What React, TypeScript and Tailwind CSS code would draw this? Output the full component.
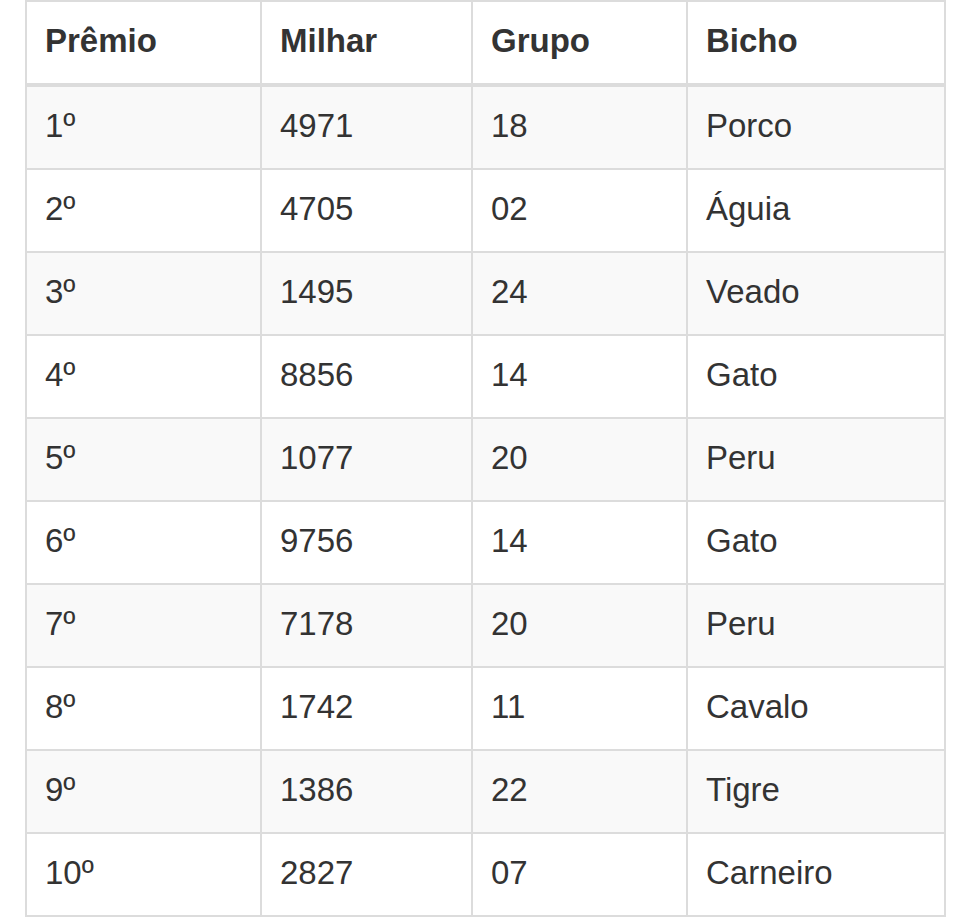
const rows = [
  ["1º", "4971", "18", "Porco"],
  ["2º", "4705", "02", "Águia"],
  ["3º", "1495", "24", "Veado"],
  ["4º", "8856", "14", "Gato"],
  ["5º", "1077", "20", "Peru"],
  ["6º", "9756", "14", "Gato"],
  ["7º", "7178", "20", "Peru"],
  ["8º", "1742", "11", "Cavalo"],
  ["9º", "1386", "22", "Tigre"],
  ["10º", "2827", "07", "Carneiro"],
];

const headers = ["Prêmio", "Milhar", "Grupo", "Bicho"];
const widths = ["w-[235px]", "w-[211px]", "w-[215px]", "w-[258px]"];

export default function App() {
  return (
    <div className="min-h-[923px] bg-white pl-[25px] font-['Liberation_Sans',Arial,sans-serif] text-[33px] leading-[45px] text-[#333]">
      <table className="w-[921px] table-fixed border-collapse border-2 border-[#dcdcdc]">
        <thead>
          <tr>
            {headers.map((h, i) => (
              <th
                key={h}
                className={`${widths[i]} border-2 border-b-4 border-[#dcdcdc] px-[18px] pt-[16px] pb-[20px] text-left font-bold`}
              >
                {h}
              </th>
            ))}
          </tr>
        </thead>
        <tbody>
          {rows.map((r, idx) => (
            <tr key={r[0]} className={idx % 2 === 0 ? "bg-[#f9f9f9]" : "bg-white"}>
              {r.map((c, i) => (
                <td key={i} className="border-2 border-[#dcdcdc] px-[18px] pt-[16px] pb-[20px]">
                  {c}
                </td>
              ))}
            </tr>
          ))}
        </tbody>
      </table>
    </div>
  );
}
